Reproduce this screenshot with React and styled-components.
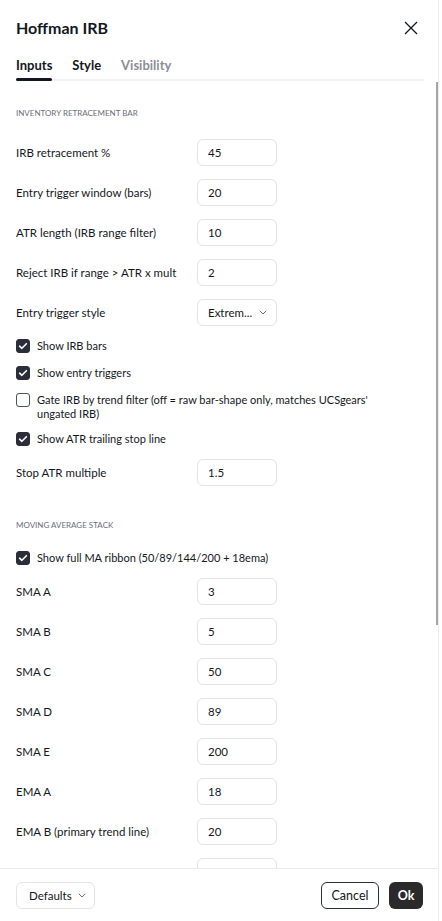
import React from 'react';
import styled, { createGlobalStyle } from 'styled-components';

const GlobalStyle = createGlobalStyle`
  html, body {
    margin: 0;
    padding: 0;
    background: #ffffff;
  }
  body {
    font-family: Lato, "Liberation Sans", sans-serif;
    color: #131722;
  }
`;

const irbInputs = [
  { label: 'IRB retracement %', value: '45' },
  { label: 'Entry trigger window (bars)', value: '20' },
  { label: 'ATR length (IRB range filter)', value: '10' },
  { label: 'Reject IRB if range > ATR x mult', value: '2' },
  { label: 'Entry trigger style', value: 'Extrem...', select: true },
];

const irbToggles = [
  { label: 'Show IRB bars', checked: true },
  { label: 'Show entry triggers', checked: true },
  {
    label: "Gate IRB by trend filter (off = raw bar-shape only, matches UCSgears' ungated IRB)",
    checked: false,
  },
  { label: 'Show ATR trailing stop line', checked: true },
];

const maInputs = [
  { label: 'SMA A', value: '3' },
  { label: 'SMA B', value: '5' },
  { label: 'SMA C', value: '50' },
  { label: 'SMA D', value: '89' },
  { label: 'SMA E', value: '200' },
  { label: 'EMA A', value: '18' },
  { label: 'EMA B (primary trend line)', value: '20' },
  { label: 'EMA C', value: '50' },
];

export default function App() {
  return (
    <>
      <GlobalStyle />
      <Page>
        <Dialog>
          <Header>
            <Title>Hoffman IRB</Title>
            <CloseButton aria-label="Close">
              <svg width="14" height="14" viewBox="0 0 14 14">
                <path d="M1 1L13 13M13 1L1 13" stroke="#131722" strokeWidth="1.3" fill="none" />
              </svg>
            </CloseButton>
          </Header>

          <Tabs>
            <Tab $active>Inputs</Tab>
            <Tab>Style</Tab>
            <Tab $muted>Visibility</Tab>
          </Tabs>

          <Body>
            <Scroller>
              <SectionTitle>Inventory retracement bar</SectionTitle>
              {irbInputs.map((row) => (
                <InputRow key={row.label} {...row} />
              ))}
              {irbToggles.map((row) => (
                <CheckRow key={row.label} {...row} />
              ))}
              <InputRow label="Stop ATR multiple" value="1.5" />

              <SectionTitle $spaced>Moving average stack</SectionTitle>
              <CheckRow label="Show full MA ribbon (50/89/144/200 + 18ema)" checked />
              {maInputs.map((row) => (
                <InputRow key={row.label} {...row} />
              ))}
            </Scroller>
            <ScrollThumb />
          </Body>

          <Footer>
            <DefaultsButton>
              Defaults
              <Chevron />
            </DefaultsButton>
            <FooterActions>
              <CancelButton>Cancel</CancelButton>
              <OkButton>Ok</OkButton>
            </FooterActions>
          </Footer>
        </Dialog>
        <ChartEdge />
      </Page>
    </>
  );
}

function Chevron() {
  return (
    <svg width="8" height="5" viewBox="0 0 8 5">
      <path d="M0.8 0.8l3.2 3.2L7.2 0.8" stroke="#6a6d78" strokeWidth="1" fill="none" />
    </svg>
  );
}

function InputRow({ label, value, select }) {
  return (
    <Row>
      <Label>{label}</Label>
      <Field>
        <span>{value}</span>
        {select && <Chevron />}
      </Field>
    </Row>
  );
}

function CheckRow({ label, checked }) {
  return (
    <CheckLine>
      <BoxWrap>
        <Box $checked={checked}>
          {checked && (
            <svg width="10" height="8" viewBox="0 0 10 8">
              <path d="M1.6 4.2L3.9 6.3L8.4 1.7" stroke="#fff" strokeWidth="1.6" fill="none" strokeLinecap="round" strokeLinejoin="round" />
            </svg>
          )}
        </Box>
      </BoxWrap>
      <CheckText>{label}</CheckText>
    </CheckLine>
  );
}

const Page = styled.div`
  display: flex;
  height: 921px;
  overflow: hidden;
`;

const Dialog = styled.div`
  width: 438px;
  height: 100%;
  display: flex;
  flex-direction: column;
  background: #fff;
`;

const ChartEdge = styled.div`
  flex: 1;
  border-left: 1px solid #eceef2;
  background: #fff;
`;

const Header = styled.div`
  height: 56px;
  flex: none;
  box-sizing: border-box;
  display: flex;
  align-items: center;
  justify-content: space-between;
  padding: 0 19px 1px 16px;
`;

const Title = styled.h2`
  margin: 0;
  font-size: 16px;
  font-weight: 700;
  color: #131722;
`;

const CloseButton = styled.div`
  display: flex;
  align-items: center;
  justify-content: center;
  width: 16px;
  height: 16px;
`;

const Tabs = styled.div`
  flex: none;
  height: 23px;
  margin: 0 14px 0 16px;
  display: flex;
  align-items: flex-start;
  gap: 20px;
  border-bottom: 2px solid #f0f1f3;
`;

const Tab = styled.div`
  position: relative;
  font-size: 13px;
  font-weight: 700;
  line-height: 18px;
  color: ${(p) => (p.$muted ? '#8b8e97' : '#131722')};

  &::after {
    content: '';
    display: ${(p) => (p.$active ? 'block' : 'none')};
    position: absolute;
    left: 0;
    right: 0;
    bottom: -7px;
    height: 3px;
    border-radius: 2px;
    background: #131722;
  }
`;

const Body = styled.div`
  position: relative;
  flex: 1;
  min-height: 0;
  overflow: hidden;
`;

const Scroller = styled.div`
  padding: 25px 161px 0 16px;
  display: flex;
  flex-direction: column;
`;

const ScrollThumb = styled.div`
  position: absolute;
  top: 1px;
  right: 0;
  width: 2px;
  height: 543px;
  background: #a3a6ad;
`;

const SectionTitle = styled.div`
  font-size: 8px;
  line-height: 14px;
  text-transform: uppercase;
  color: #6a6d78;
  margin-top: ${(p) => (p.$spaced ? '26px' : '0')};
  margin-bottom: 12px;
`;

const Row = styled.div`
  height: 40px;
  flex: none;
  display: flex;
  align-items: center;
  justify-content: space-between;
`;

const Label = styled.div`
  font-size: 11.5px;
  color: #131722;
`;

const Field = styled.div`
  box-sizing: border-box;
  width: 80px;
  height: 27px;
  display: flex;
  align-items: center;
  justify-content: space-between;
  padding: 0 9px 0 10px;
  border: 1px solid #e0e3eb;
  border-radius: 6px;
  font-size: 11.5px;
  color: #131722;
`;

const CheckLine = styled.div`
  display: flex;
  align-items: flex-start;
  gap: 7px;
  padding: 4.5px 0;
  margin-right: -118px;
`;

const BoxWrap = styled.div`
  flex: none;
  width: 14px;
  height: 18px;
  display: flex;
  align-items: center;
`;

const Box = styled.div`
  box-sizing: border-box;
  width: 14px;
  height: 14px;
  border-radius: 3px;
  display: flex;
  align-items: center;
  justify-content: center;
  background: ${(p) => (p.$checked ? '#2a2e39' : '#fff')};
  border: 1px solid ${(p) => (p.$checked ? '#2a2e39' : '#50535e')};
`;

const CheckText = styled.div`
  font-size: 11px;
  line-height: 14px;
  margin-top: 2px;
  color: #131722;
`;

const Footer = styled.div`
  flex: none;
  height: 52px;
  border-top: 1px solid #e9eaee;
  display: flex;
  align-items: center;
  justify-content: space-between;
  padding: 0 15px 0 16px;
`;

const DefaultsButton = styled.div`
  box-sizing: border-box;
  width: 79px;
  height: 27px;
  display: flex;
  align-items: center;
  justify-content: space-between;
  padding: 0 8px 0 12px;
  border: 1px solid #e0e3eb;
  border-radius: 6px;
  font-size: 11.5px;
  color: #131722;
`;

const FooterActions = styled.div`
  display: flex;
  gap: 10px;
`;

const CancelButton = styled.div`
  box-sizing: border-box;
  width: 58px;
  height: 27px;
  display: flex;
  align-items: center;
  justify-content: center;
  border: 1px solid #2a2e39;
  border-radius: 6px;
  font-size: 12.5px;
  color: #131722;
`;

const OkButton = styled.div`
  box-sizing: border-box;
  width: 34px;
  height: 27px;
  display: flex;
  align-items: center;
  justify-content: center;
  border-radius: 6px;
  background: #2a2a2a;
  font-size: 12.5px;
  font-weight: 700;
  color: #fff;
`;
